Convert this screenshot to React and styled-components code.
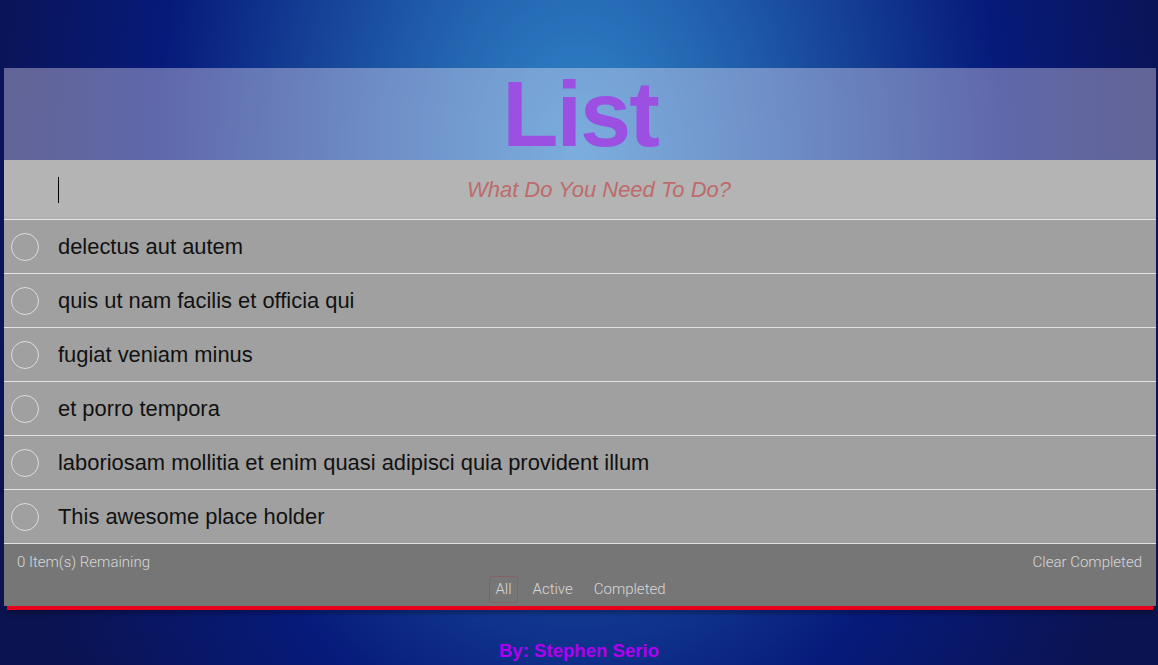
import React, { useState } from 'react';
import styled, { createGlobalStyle } from 'styled-components';

const GlobalStyle = createGlobalStyle`
  html, body {
    margin: 0;
    padding: 0;
  }
  body {
    min-height: 100vh;
    font-family: "Liberation Sans", Arial, sans-serif;
    background: radial-gradient(ellipse 620px 900px at 50% 24%, #3288cc 0%, #1f5aa8 30%, #061a7a 68%, #0b1350 100%);
    background-color: #0b1350;
  }
`;

const todos = [
  'delectus aut autem',
  'quis ut nam facilis et officia qui',
  'fugiat veniam minus',
  'et porro tempora',
  'laboriosam mollitia et enim quasi adipisci quia provident illum',
  'This awesome place holder',
];

const App = () => {
  // HOOK
  const [text, setText] = useState('');
  const [filter, setFilter] = useState('All');

  return (
    <>
      <GlobalStyle />
      <Page>
        <TodoApp>
          <Header>
            <Title>List</Title>
          </Header>
          <InputWrap>
            <NewTodo
              autoFocus
              value={text}
              onChange={(e) => setText(e.target.value)}
              placeholder="What Do You Need To Do?"
            />
            {text === '' && <Caret />}
          </InputWrap>
          <TodoList>
            {todos.map((item) => (
              <TodoRow key={item}>
                <Toggle />
                <TodoLabel>{item}</TodoLabel>
              </TodoRow>
            ))}
          </TodoList>
          <Footer>
            <FooterTop>
              <FooterText>0 Item(s) Remaining</FooterText>
              <FooterText>Clear Completed</FooterText>
            </FooterTop>
            <Filters>
              {['All', 'Active', 'Completed'].map((f) => (
                <FilterLink key={f} selected={filter === f} onClick={() => setFilter(f)}>
                  {f}
                </FilterLink>
              ))}
            </Filters>
          </Footer>
          <RedEdge />
        </TodoApp>
        <Credit>By: Stephen Serio</Credit>
      </Page>
    </>
  );
};
export default App;

// STYLE
const Page = styled.div`
  display: flex;
  flex-direction: column;
  padding-top: 68px;
`;
const TodoApp = styled.section`
  display: flex;
  flex-direction: column;
  margin: 0 2px 0 4px;
`;
const Header = styled.header`
  height: 92px;
  display: flex;
  justify-content: center;
  background: rgba(250, 238, 255, 0.37);
`;
const Title = styled.h1`
  margin: 0;
  font-family: "Liberation Sans", Arial, sans-serif;
  font-size: 92px;
  line-height: 92px;
  font-weight: bold;
  letter-spacing: -2px;
  color: #9b50e2;
`;
const InputWrap = styled.div`
  position: relative;
`;
const NewTodo = styled.input`
  display: block;
  box-sizing: border-box;
  width: 100%;
  height: 60px;
  margin: 0;
  padding: 0 16px 0 54px;
  border: none;
  border-bottom: 1px solid #e4e4e4;
  box-shadow: inset 0 -2px 0 #afafaf;
  outline: none;
  background: #b4b4b4;
  font-family: "Liberation Sans", Arial, sans-serif;
  font-size: 22px;
  color: #111;
  caret-color: transparent;
  &::placeholder {
    text-align: center;
    font-style: italic;
    color: #bd6b6b;
  }
`;
const Caret = styled.span`
  position: absolute;
  left: 54px;
  top: 17px;
  width: 1px;
  height: 26px;
  background: #000;
  pointer-events: none;
`;
const TodoList = styled.ul`
  list-style: none;
  margin: 0;
  padding: 0;
`;
const TodoRow = styled.li`
  display: flex;
  align-items: center;
  gap: 19px;
  height: 53px;
  padding-left: 7px;
  background: #a0a0a0;
  border-bottom: 1px solid #e2e2e2;
`;
const Toggle = styled.span`
  box-sizing: border-box;
  width: 28px;
  height: 28px;
  border-radius: 50%;
  border: 1px solid #dcdcdc;
  flex-shrink: 0;
`;
const TodoLabel = styled.label`
  padding-top: 1px;
  font-size: 21.9px;
  color: #111;
`;
const Footer = styled.footer`
  display: flex;
  flex-direction: column;
  gap: 4px;
  padding: 8px 14px 3px 13px;
  background: #767676;
`;
const FooterTop = styled.div`
  display: flex;
  justify-content: space-between;
  line-height: 20px;
`;
const FooterText = styled.span`
  font-family: Roboto, "Liberation Sans", sans-serif;
  font-weight: 300;
  font-size: 15px;
  color: #d8d8d8;
`;
const Filters = styled.div`
  display: flex;
  justify-content: center;
  gap: 9px;
  padding-left: 2px;
`;
const FilterLink = styled.a`
  padding: 3px 5px;
  line-height: 19px;
  border-radius: 3px;
  border: 1px solid ${(props) => (props.selected ? 'rgba(175, 47, 47, 0.3)' : 'transparent')};
  font-family: Roboto, "Liberation Sans", sans-serif;
  font-weight: 300;
  font-size: 15px;
  color: #d8d8d8;
  cursor: pointer;
`;
const RedEdge = styled.div`
  height: 4px;
  margin: 0 3px;
  background: #e8001a;
  box-shadow: 0 3px 4px rgba(0, 0, 0, 0.35);
`;
const Credit = styled.p`
  margin: 31px 0 0;
  text-align: center;
  font-size: 18.6px;
  line-height: 20px;
  font-weight: bold;
  color: #b000f0;
`;
